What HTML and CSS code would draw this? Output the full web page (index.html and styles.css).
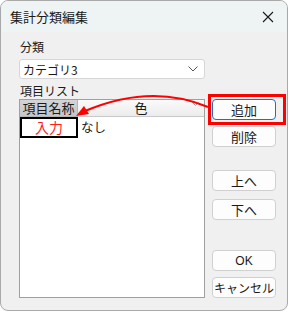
FILE: index.html
```html
<!DOCTYPE html>
<html lang="ja">
<head>
    <meta charset="UTF-8">
    <title>集計分類編集</title>
    <link rel="stylesheet" href="styles.css">
</head>
<body>
    <div class="dialog">
        <div class="titlebar">
            <span class="title">集計分類編集</span>
            <svg class="close" width="12" height="12" viewBox="0 0 12 12">
                <path d="M1 1 L11 11 M11 1 L1 11" stroke="#1a1a1a" stroke-width="1.1" fill="none"/>
            </svg>
        </div>

        <div class="content">
            <div class="main">
                <div class="label">分類</div>
                <div class="combo">
                    <span>カテゴリ3</span>
                    <svg width="10" height="6" viewBox="0 0 10 6">
                        <path d="M0.5 0.5 L5 5 L9.5 0.5" stroke="#555" stroke-width="1" fill="none"/>
                    </svg>
                </div>
                <div class="label list-label">項目リスト</div>
                <div class="grid">
                    <div class="grid-head">
                        <div class="col-name">項目名称</div>
                        <div class="col-color">
                            <span>色</span>
                            <svg class="head-arrow" width="7" height="4" viewBox="0 0 7 4">
                                <path d="M0.5 0.5 L3.5 3.5 L6.5 0.5" stroke="#999" stroke-width="1" fill="none"/>
                            </svg>
                        </div>
                    </div>
                    <div class="grid-row">
                        <div class="cell-name">入力</div>
                        <div class="cell-color">なし</div>
                    </div>
                </div>
            </div>

            <div class="side">
                <button class="btn default">追加</button>
                <button class="btn">削除</button>
                <button class="btn up">上へ</button>
                <button class="btn">下へ</button>
                <button class="btn ok">OK</button>
                <button class="btn cancel">キャンセル</button>
            </div>
        </div>

        <!-- annotation overlay -->
        <div class="highlight"></div>
        <svg class="arrow" width="286" height="309" viewBox="0 0 286 309">
            <path d="M207 106 Q150 82 84 110" stroke="#ff0000" stroke-width="2" fill="none"/>
            <polygon points="75,115 83,105 88,113" fill="#ff0000"/>
        </svg>
    </div>
</body>
</html>
```

FILE: styles.css
```css
* {
    margin: 0;
    padding: 0;
    box-sizing: border-box;
}

body {
    background: #ffffff;
    font-family: 'Noto Sans CJK JP', 'Noto Sans', sans-serif;
    font-size: 12px;
    color: #1a1a1a;
}

.dialog {
    position: relative;
    width: 288px;
    height: 311px;
    border: 1px solid #a9a9a9;
    border-radius: 8px;
    background: #f0f0f0;
    overflow: hidden;
}

/* Title bar */
.titlebar {
    height: 31px;
    background: #eef3f3;
    display: flex;
    align-items: center;
    justify-content: space-between;
    padding: 0 9px 0 9px;
}

.title {
    font-size: 13px;
}

.close {
    margin-right: 4px;
}

/* Content area */
.content {
    display: flex;
    padding: 7px 0 0 18px;
}

.main {
    width: 186px;
}

.label {
    line-height: 16px;
    height: 16px;
    padding-left: 1px;
}

.combo {
    margin-top: 4px;
    height: 20px;
    background: #ffffff;
    border: 1px solid #d6d6d6;
    border-radius: 3px;
    display: flex;
    align-items: center;
    justify-content: space-between;
    padding: 0 6px 0 3px;
}

.list-label {
    margin-top: 4px;
}

/* Grid */
.grid {
    height: 199px;
    background: #ffffff;
    border: 1px solid #a0a0a0;
}

.grid-head {
    display: flex;
    height: 17px;
    line-height: 16px;
}

.col-name {
    width: 58px;
    text-align: center;
    font-size: 13px;
    background: linear-gradient(#d4d4d6, #c6c6c8);
    border-right: 1px solid #b5b5b5;
    border-bottom: 1px solid #b5b5b5;
}

.col-color {
    flex: 1;
    position: relative;
    text-align: center;
    font-size: 13px;
    background: linear-gradient(#fafafa, #ececec);
    border-bottom: 1px solid #c8c8c8;
}

.head-arrow {
    position: absolute;
    right: 5px;
    top: 2px;
}

.grid-row {
    display: flex;
    height: 21px;
}

.cell-name {
    width: 58px;
    border: 2px solid #000000;
    color: #ff1f1f;
    font-size: 14px;
    line-height: 16px;
    text-align: center;
}

.cell-color {
    flex: 1;
    padding-left: 3px;
    line-height: 20px;
    font-size: 12.5px;
}

/* Side buttons */
.side {
    display: flex;
    flex-direction: column;
    margin-left: 7px;
    padding-top: 60px;
}

.btn {
    width: 64px;
    height: 21px;
    margin-bottom: 6px;
    background: #fdfdfd;
    border: 1px solid #d0d0d0;
    border-radius: 4px;
    font-family: inherit;
    font-size: 13px;
    color: #1a1a1a;
}

.btn.default {
    border-color: #1f6fc5;
}

.btn.up {
    margin-top: 17px;
    margin-bottom: 8px;
}

.btn.ok {
    margin-top: 24px;
    font-family: 'Liberation Sans', sans-serif;
    font-size: 12px;
}

.btn.cancel {
    font-size: 12px;
}

/* Annotation */
.highlight {
    position: absolute;
    left: 207px;
    top: 93px;
    width: 78px;
    height: 31px;
    border: 3px solid #ff0000;
}

.arrow {
    position: absolute;
    left: 0;
    top: 0;
    pointer-events: none;
}
```
